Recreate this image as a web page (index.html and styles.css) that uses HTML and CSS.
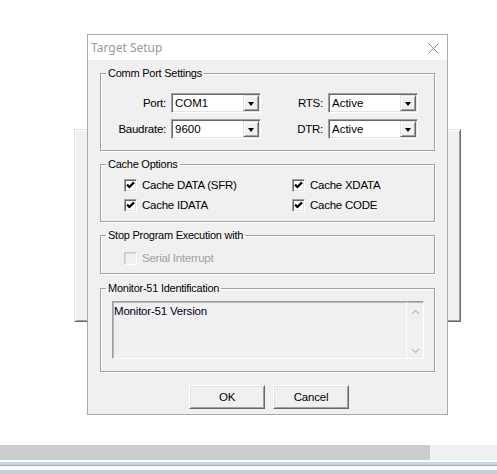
FILE: index.html
```html
<!DOCTYPE html>
<html>
<head>
<meta charset="utf-8">
<title>Target Setup</title>
<link rel="stylesheet" href="styles.css">
</head>
<body>
<div class="desktop">
  <div class="backwin"></div>

  <div class="dialog">
    <div class="titlebar">
      <span class="title">Target Setup</span>
      <svg class="close" width="11" height="11" viewBox="0 0 11 11"><path d="M0.5 0.5 L10.5 10.5 M10.5 0.5 L0.5 10.5" stroke="#8a8a8a" stroke-width="1" fill="none"/></svg>
    </div>
    <div class="client">
      <fieldset class="group g-comm">
        <legend>Comm Port Settings</legend>
        <div class="portgrid">
          <label class="lbl">Port:</label>
          <div class="combo"><span class="val">COM1</span><span class="drop"><i class="tri"></i></span></div>
          <label class="lbl">RTS:</label>
          <div class="combo"><span class="val">Active</span><span class="drop"><i class="tri"></i></span></div>
          <label class="lbl">Baudrate:</label>
          <div class="combo"><span class="val">9600</span><span class="drop"><i class="tri"></i></span></div>
          <label class="lbl">DTR:</label>
          <div class="combo"><span class="val">Active</span><span class="drop"><i class="tri"></i></span></div>
        </div>
      </fieldset>

      <fieldset class="group g-cache">
        <legend>Cache Options</legend>
        <div class="checkgrid">
          <div class="check"><span class="box"><svg width="9" height="9" viewBox="0 0 9 9"><path d="M1 3.6 L3.4 6 L8 1.4" stroke="#000" stroke-width="2.2" fill="none"/></svg></span><span>Cache DATA (SFR)</span></div>
          <div class="check"><span class="box"><svg width="9" height="9" viewBox="0 0 9 9"><path d="M1 3.6 L3.4 6 L8 1.4" stroke="#000" stroke-width="2.2" fill="none"/></svg></span><span>Cache XDATA</span></div>
          <div class="check"><span class="box"><svg width="9" height="9" viewBox="0 0 9 9"><path d="M1 3.6 L3.4 6 L8 1.4" stroke="#000" stroke-width="2.2" fill="none"/></svg></span><span>Cache IDATA</span></div>
          <div class="check"><span class="box"><svg width="9" height="9" viewBox="0 0 9 9"><path d="M1 3.6 L3.4 6 L8 1.4" stroke="#000" stroke-width="2.2" fill="none"/></svg></span><span>Cache CODE</span></div>
        </div>
      </fieldset>

      <fieldset class="group g-stop">
        <legend>Stop Program Execution with</legend>
        <div class="checkgrid single">
          <div class="check disabled"><span class="box"></span><span>Serial Interrupt</span></div>
        </div>
      </fieldset>

      <fieldset class="group g-mon">
        <legend>Monitor-51 Identification</legend>
        <div class="textarea">
          <div class="textcontent">Monitor-51 Version</div>
          <div class="vscroll">
            <svg width="9" height="6" viewBox="0 0 9 6"><path d="M1 5 L4.5 1.5 L8 5" stroke="#c2c2c2" stroke-width="1.5" fill="none"/></svg>
            <svg width="9" height="6" viewBox="0 0 9 6"><path d="M1 1 L4.5 4.5 L8 1" stroke="#c2c2c2" stroke-width="1.5" fill="none"/></svg>
          </div>
        </div>
      </fieldset>

      <div class="buttons">
        <button class="btn">OK</button>
        <button class="btn">Cancel</button>
      </div>
    </div>
  </div>

  <div class="bottom">
    <div class="hscroll"><div class="track"></div><div class="corner"></div></div>
    <div class="ln ln-white"></div>
    <div class="ln ln-blue"></div>
    <div class="ln ln-gray"></div>
    <div class="ln ln-white2"></div>
    <div class="ln ln-steel"></div>
  </div>
</div>
</body>
</html>
```

FILE: styles.css
```css
* { box-sizing: border-box; }
html, body { margin: 0; padding: 0; background: #fff; overflow: hidden; }

.desktop {
  position: relative;
  width: 497px;
  height: 474px;
  display: flex;
  flex-direction: column;
  font-family: "Liberation Sans", Arial, sans-serif;
  font-size: 11px;
  letter-spacing: -0.25px;
  color: #000;
}

/* window behind the dialog */
.backwin {
  position: absolute;
  left: 74px;
  top: 129px;
  width: 387px;
  height: 193px;
  background: #f0f0f0;
  border: 1px solid;
  border-color: #e3e3e3 #696969 #696969 #e3e3e3;
  box-shadow: inset 1px 1px 0 #fff, inset -1px -1px 0 #a0a0a0;
}

/* dialog window */
.dialog {
  position: absolute;
  left: 87px;
  top: 34px;
  width: 361px;
  height: 381px;
  border: 1px solid #a9a9a9;
  background: #f0f0f0;
  display: flex;
  flex-direction: column;
}
.titlebar {
  height: 25px;
  background: #fff;
  display: flex;
  align-items: center;
  justify-content: space-between;
  padding: 0 8px 0 3px;
}
.title {
  font-family: "Noto Sans", "Open Sans", sans-serif;
  font-size: 12px;
  letter-spacing: 0;
  color: #9a9a9a;
  margin-top: -1px;
}
.close { display: block; margin-top: 1px; }

.client {
  flex: 1;
  padding: 6px 12px 0 12px;
  display: flex;
  flex-direction: column;
}

/* group boxes */
.group {
  margin: 0;
  padding: 0;
  border: 1px solid #a0a0a0;
  box-shadow: 1px 1px 0 #fff, inset 1px 1px 0 #fff;
  min-width: 0;
}
.group legend {
  margin-left: 5px;
  padding: 0 2px;
  line-height: 14px;
  height: 14px;
}
.g-comm { height: 85px; }
.g-cache { height: 65px; margin-top: 6px; }
.g-stop { height: 46px; margin-top: 6px; }
.g-mon { height: 91px; margin-top: 7px; }

/* comm port grid */
.portgrid {
  display: grid;
  grid-template-columns: 65px 90px 57px 90px;
  grid-auto-rows: 20px;
  column-gap: 5px;
  row-gap: 6px;
  padding-top: 13px;
}
.lbl {
  text-align: right;
  line-height: 20px;
  font-size: 11.5px;
}
.combo {
  display: flex;
  align-items: stretch;
  background: #fff;
  border: 1px solid;
  border-color: #a0a0a0 #fff #fff #a0a0a0;
  box-shadow: inset 1px 1px 0 #696969, inset -1px -1px 0 #e3e3e3;
  padding: 1px;
}
.combo .val {
  flex: 1;
  line-height: 16px;
  padding-left: 2px;
  letter-spacing: 0;
  font-size: 11.5px;
}
.combo .drop {
  width: 16px;
  background: #f0f0f0;
  border: 1px solid;
  border-color: #e3e3e3 #696969 #696969 #e3e3e3;
  box-shadow: inset 1px 1px 0 #fff, inset -1px -1px 0 #a0a0a0;
  display: flex;
  align-items: center;
  justify-content: center;
}
.tri {
  display: block;
  width: 0;
  height: 0;
  border-left: 3.5px solid transparent;
  border-right: 3.5px solid transparent;
  border-top: 4px solid #000;
  margin-top: 1px;
}

/* checkboxes */
.checkgrid {
  display: grid;
  grid-template-columns: 168px auto;
  grid-auto-rows: 13px;
  row-gap: 7px;
  padding: 8px 0 0 23px;
}
.checkgrid.single { padding-top: 10px; }
.check {
  display: flex;
  align-items: center;
  gap: 5px;
  line-height: 13px;
  font-size: 11.5px;
}
.box {
  width: 13px;
  height: 13px;
  flex: none;
  background: #fff;
  border: 1px solid;
  border-color: #a0a0a0 #fff #fff #a0a0a0;
  box-shadow: inset 1px 1px 0 #696969, inset -1px -1px 0 #e3e3e3;
  display: flex;
  align-items: center;
  justify-content: center;
}
.check.disabled { color: #a0a0a0; }
.check.disabled .box {
  background: #f0f0f0;
  border-color: #c8c8c8 #fff #fff #c8c8c8;
  box-shadow: inset 1px 1px 0 #dadada, inset -1px -1px 0 #f4f4f4;
}

/* textarea */
.textarea {
  margin: 6px 0 0 11px;
  width: 312px;
  height: 58px;
  border: 1px solid;
  border-color: #a0a0a0 #fff #fff #a0a0a0;
  box-shadow: inset 1px 1px 0 #b4b4b4;
  background: #f0f0f0;
  display: flex;
}
.textcontent {
  flex: 1;
  padding: 2px 0 0 1px;
  line-height: 14px;
  color: #000026;
  font-size: 11.5px;
  letter-spacing: -0.2px;
}
.vscroll {
  width: 17px;
  border-left: 1px solid #fff;
  display: flex;
  flex-direction: column;
  justify-content: space-between;
  align-items: center;
  padding: 7px 0 4px;
}
.vscroll svg { display: block; }

/* buttons */
.buttons {
  display: flex;
  gap: 8px;
  padding-left: 89px;
  margin-top: 13px;
}
.btn {
  width: 76px;
  height: 24px;
  margin: 0;
  padding: 0;
  font-family: "Liberation Sans", Arial, sans-serif;
  font-size: 11.5px;
  letter-spacing: -0.2px;
  color: #000;
  background: #f0f0f0;
  border: 1px solid;
  border-color: #fff #696969 #696969 #fff;
  box-shadow: inset 1px 1px 0 #e3e3e3, inset -1px -1px 0 #a0a0a0;
}

/* bottom strips */
.bottom {
  margin-top: auto;
  display: flex;
  flex-direction: column;
}
.hscroll { display: flex; height: 15px; }
.hscroll .track { width: 430px; background: #cccccc; }
.hscroll .corner { flex: 1; background: #f0f0f0; }
.ln { width: 100%; }
.ln-white { height: 2px; background: #fff; }
.ln-blue { height: 3px; background: #c6d4ee; }
.ln-gray { height: 1px; background: #a9a9a9; }
.ln-white2 { height: 4px; background: #fff; }
.ln-steel { height: 4px; background: #c3cfdc; }
```
